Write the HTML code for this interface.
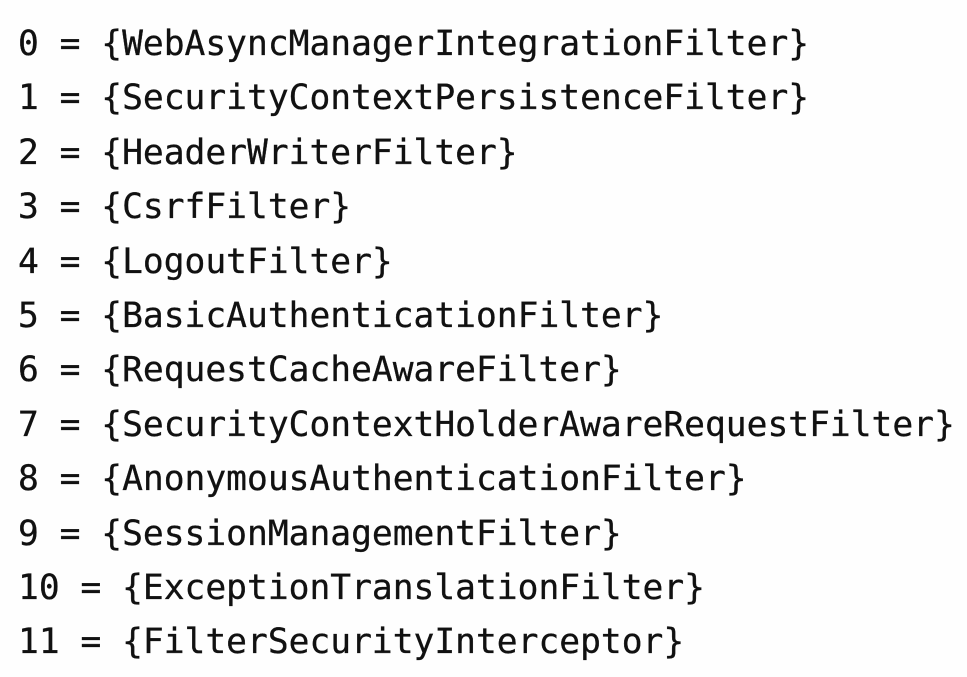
<!DOCTYPE html>
<html><head><meta charset="utf-8"><style>
html,body{margin:0;padding:0;background:#fefefe;width:967px;height:677px;overflow:hidden}
pre{margin:0;padding:17px 0 0 18px;font-family:"DejaVu Sans Mono","Liberation Mono",monospace;font-size:34.6px;line-height:54.4px;color:#111;-webkit-text-stroke:0.3px #111}
</style></head><body><pre>0 = {WebAsyncManagerIntegrationFilter}
1 = {SecurityContextPersistenceFilter}
2 = {HeaderWriterFilter}
3 = {CsrfFilter}
4 = {LogoutFilter}
5 = {BasicAuthenticationFilter}
6 = {RequestCacheAwareFilter}
7 = {SecurityContextHolderAwareRequestFilter}
8 = {AnonymousAuthenticationFilter}
9 = {SessionManagementFilter}
10 = {ExceptionTranslationFilter}
11 = {FilterSecurityInterceptor}</pre></body></html>
